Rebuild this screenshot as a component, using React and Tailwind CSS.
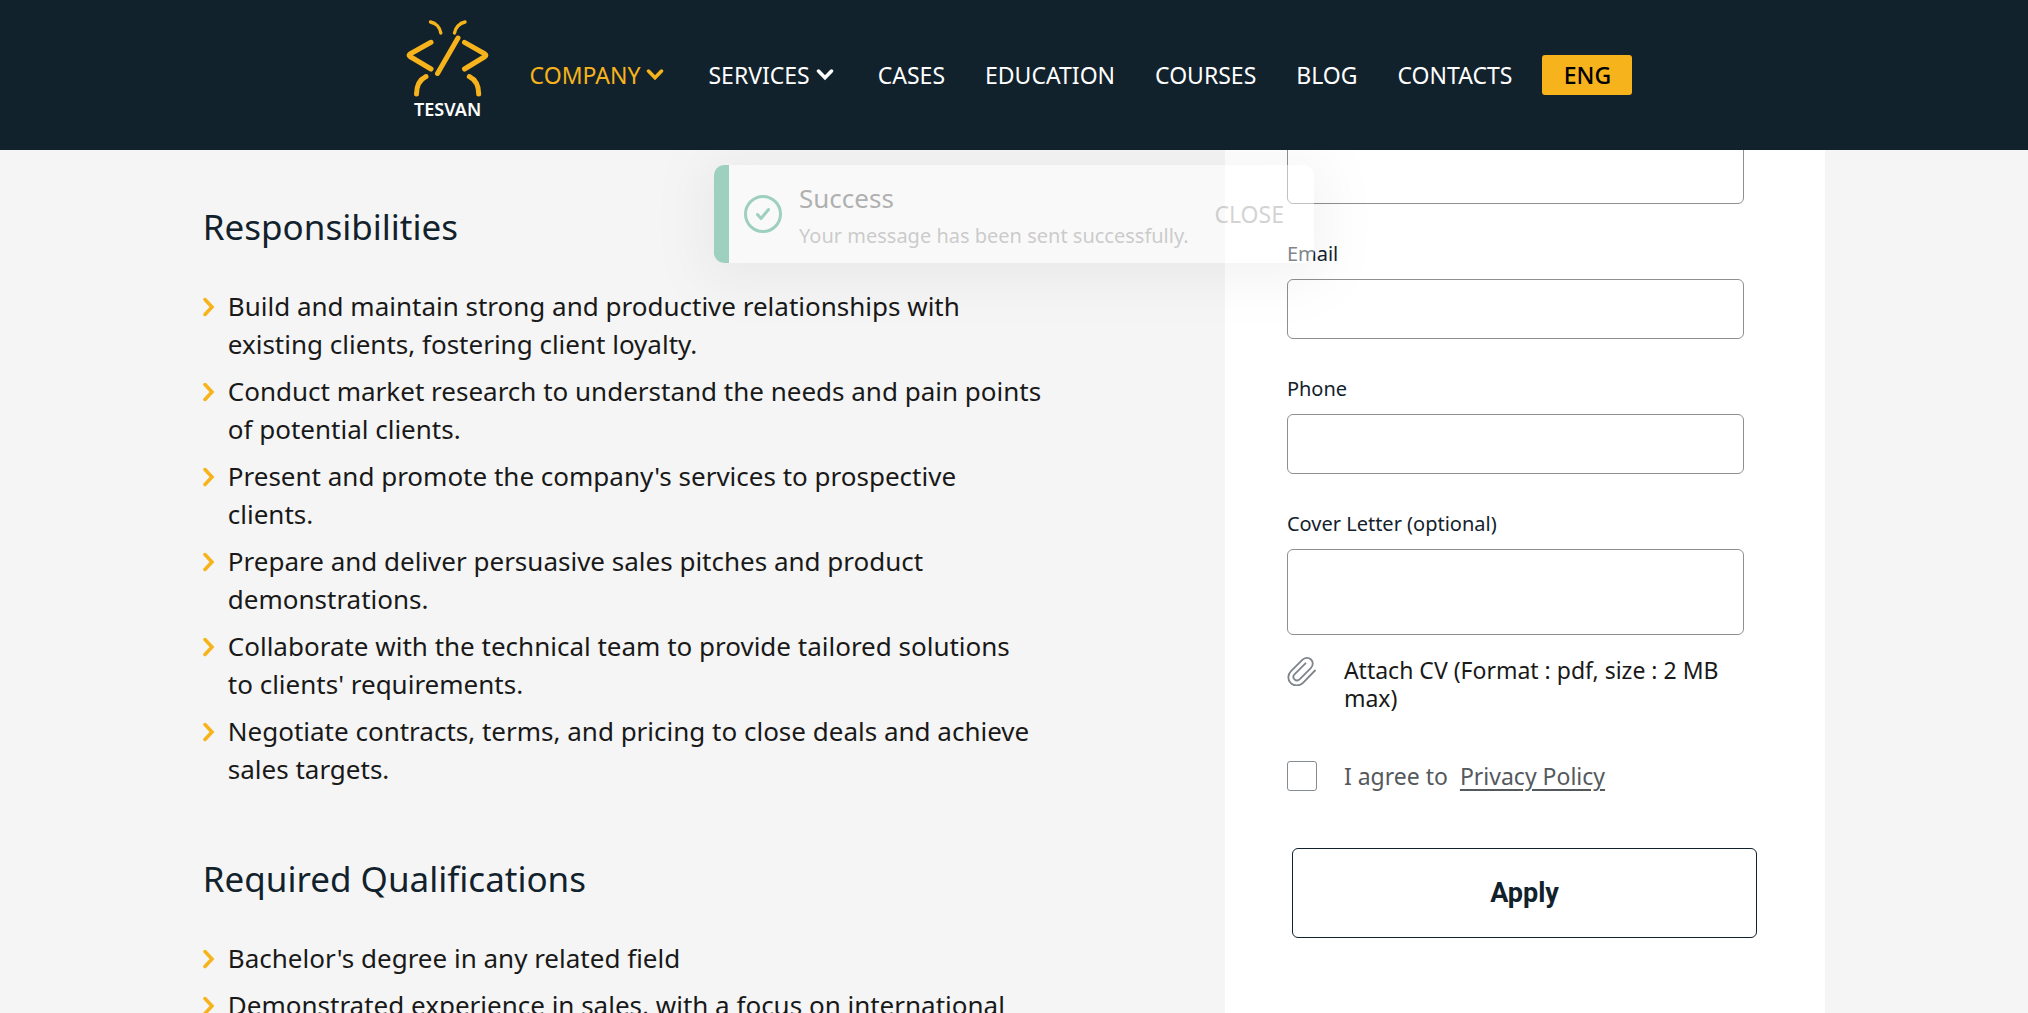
import React from "react";

const plainLinks = ["CASES", "EDUCATION", "COURSES", "BLOG", "CONTACTS"];

const responsibilities = [
  "Build and maintain strong and productive relationships with existing clients, fostering client loyalty.",
  "Conduct market research to understand the needs and pain points of potential clients.",
  "Present and promote the company's services to prospective clients.",
  "Prepare and deliver persuasive sales pitches and product demonstrations.",
  "Collaborate with the technical team to provide tailored solutions to\u00a0clients' requirements.",
  "Negotiate contracts, terms, and pricing to close deals and achieve sales targets.",
];

const qualifications = [
  "Bachelor's degree in any related field",
  "Demonstrated experience in sales, with a focus on international",
];

function Logo() {
  return (
    <a href="#home" className="flex w-[84px] shrink-0 flex-col items-center">
      <svg viewBox="0 0 84 80" className="h-[80px] w-[84px]" fill="none" stroke="#f6b31b" strokeLinecap="round" strokeLinejoin="round" aria-hidden="true">
        <g strokeWidth="3.4">
          <path d="M24.500 3C30 4 34 8.500 34.800 14" />
          <path d="M59 3C53.500 4 49.300 8.500 48.500 14" />
        </g>
        <g strokeWidth="5">
          <path d="M25 23.300L4 35Q2.200 36.200 4 37.500L25 50" />
          <path d="M58.500 23.300L79 35Q80.800 36.200 79 37.500L58.500 50" />
          <path d="M52 19L31.500 54.500" />
          <path d="M20 57.500C14 60.500 10.500 67 10.500 75" />
          <path d="M63.300 57.500C69.300 60.500 72.700 67 72.700 75" />
        </g>
      </svg>
      <span className="text-[18px] leading-5 font-semibold text-white">TESVAN</span>
    </a>
  );
}

function ChevronDown() {
  return (
    <svg viewBox="0 0 18 12" className="h-3 w-[18px]" fill="none" stroke="currentColor" strokeWidth="3.500" strokeLinecap="round" aria-hidden="true">
      <path d="M2.500 2L9 8.800L15.500 2" />
    </svg>
  );
}

function Toast() {
  return (
    <div role="status" className="absolute top-[15px] left-1/2 z-10 flex h-[98px] w-[600px] -translate-x-1/2 items-center rounded-[10px] border-l-[15px] border-[#37a47e] bg-white pr-[30px] pl-[15px] opacity-45 shadow-[0_7px_50px_10px_rgba(0,0,0,0.1)]">
      <svg viewBox="0 0 38 38" className="h-[38px] w-[38px] shrink-0" fill="none" stroke="#37a47e" strokeWidth="3" strokeLinecap="round" strokeLinejoin="round" aria-hidden="true">
        <circle cx="19" cy="19" r="17.500" />
        <path d="M13.500 19.500L17 23.500L24.500 14.500" />
      </svg>
      <div className="ml-[17px] flex flex-col gap-1.5 pt-0.5">
        <p className="text-[26px] leading-9 text-[#5d5d5d]">Success</p>
        <p className="text-[20px] leading-7 whitespace-nowrap text-[#999999]">Your message has been sent successfully.</p>
      </div>
      <button type="button" className="ml-auto text-[23px] leading-7 text-[#9f9f9f]">CLOSE</button>
    </div>
  );
}

function Section({ title, items }) {
  return (
    <section>
      <h2 className="text-[35px] leading-[48px] text-[#12222c]">{title}</h2>
      <ul className="mt-9 flex flex-col gap-[9px]">
        {items.map((item) => (
          <li key={item} className="flex gap-[13px] text-[26px] leading-[38px] text-[#191919]">
            <svg viewBox="0 0 12 20" className="mt-2.5 h-5 w-3 shrink-0" fill="none" stroke="#f6b31b" strokeWidth="3.500" strokeLinecap="round" aria-hidden="true">
              <path d="M2 2.500L9 10L2 17.500" />
            </svg>
            <span>{item}</span>
          </li>
        ))}
      </ul>
    </section>
  );
}

function Field({ id, label, type }) {
  return (
    <div className="mt-9 flex flex-col gap-[11px]">
      <label htmlFor={id} className="text-[20px] leading-7 text-[#12222c]">{label}</label>
      <input id={id} type={type} className="h-[60px] w-full rounded-md border border-[#8f8f8f] bg-white px-4 text-[20px]" />
    </div>
  );
}

function ApplicationForm() {
  return (
    <form className="w-[37%] bg-white pr-[81px] pb-20 pl-[62px]">
      <input aria-label="Name" type="text" className="-mt-1.5 block h-[60px] w-full rounded-md border border-[#8f8f8f] bg-white px-4 text-[20px]" />
      <Field id="email" label="Email" type="email" />
      <Field id="phone" label="Phone" type="tel" />
      <div className="mt-9 flex flex-col gap-[11px]">
        <label htmlFor="cover" className="text-[20px] leading-7 text-[#12222c]">Cover Letter (optional)</label>
        <textarea id="cover" className="h-[86px] w-full resize-none rounded-md border border-[#8f8f8f] bg-white px-4 py-3 text-[20px]" />
      </div>
      <label className="mt-[21px] flex cursor-pointer gap-[27px] text-[23px] leading-7 text-[#191919]">
        <svg viewBox="0 0 30 30" className="h-[30px] w-[30px] shrink-0" fill="none" stroke="#7d848a" strokeWidth="1.800" strokeLinecap="round" strokeLinejoin="round" aria-hidden="true">
          <path d="M28 14.500L16 26.800C12.500 30.300 7 30.300 3.800 27.200C.5 24 .5 18.700 4 15.200L15.300 3.900C17.800 1.400 21.600 1.200 24 3.500C26.400 5.800 26.300 9.700 23.800 12.200L12.800 23.200C11.200 24.800 9 24.900 7.500 23.400C6 21.900 6.100 19.700 7.700 18.100L18.500 7.300" />
        </svg>
        <span>Attach CV (Format : pdf, size : 2 MB max)</span>
        <input type="file" accept="application/pdf" className="sr-only" />
      </label>
      <div className="mt-[49px] flex items-center text-[23px] leading-[30px] text-[#54595e]">
        <input id="agree" type="checkbox" className="h-[30px] w-[30px] shrink-0 appearance-none rounded-[3px] border border-[#858c92] bg-white" />
        <label htmlFor="agree" className="ml-[27px]">I agree to</label>
        <a href="#privacy" className="ml-3 underline underline-offset-4">Privacy Policy</a>
      </div>
      <div className="-mr-[13px] ml-[5px] pt-[57px]">
        <button type="submit" className="h-[90px] w-full rounded-md border border-[#12222c] bg-white font-[Roboto,sans-serif] text-[27px] font-bold text-[#12222c]">Apply</button>
      </div>
    </form>
  );
}

export default function App() {
  return (
    <div className="flex h-screen flex-col overflow-hidden bg-[#f5f5f5] font-['Noto_Sans',sans-serif]">
      <header className="relative z-20 flex h-[150px] shrink-0 items-center bg-[#12222c] pl-[20%]">
        <div className="-mt-3">
          <Logo />
        </div>
        <nav className="ml-10 flex items-center gap-10 text-[23px] leading-8 text-white">
          <button type="button" className="flex items-center gap-1.5 pr-1 text-[#f6b31b]">COMPANY<ChevronDown /></button>
          <button type="button" className="flex items-center gap-1.5 pr-1">SERVICES<ChevronDown /></button>
          {plainLinks.map((name) => (
            <a key={name} href={`#${name.toLowerCase()}`}>{name}</a>
          ))}
        </nav>
        <button type="button" className="ml-[30px] h-10 w-[90px] rounded-[3px] bg-[#f6b31b] text-[23px] font-medium text-black">ENG</button>
      </header>
      <main className="relative min-h-0 flex-1 overflow-hidden">
        <Toast />
        <div className="mx-auto flex min-h-full w-4/5 justify-between">
          <div className="flex w-[52%] flex-col gap-[67px] pt-[53px] pr-0.5">
            <Section title="Responsibilities" items={responsibilities} />
            <Section title="Required Qualifications" items={qualifications} />
          </div>
          <ApplicationForm />
        </div>
      </main>
    </div>
  );
}
